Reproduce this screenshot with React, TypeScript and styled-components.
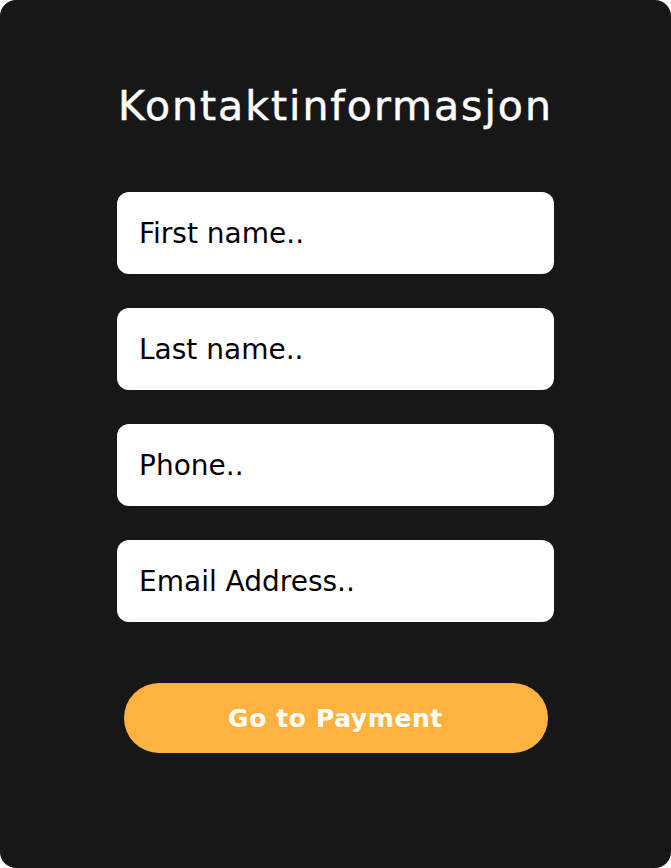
import styled, { createGlobalStyle } from "styled-components";

const GlobalStyle = createGlobalStyle`
  html, body {
    margin: 0;
    padding: 0;
    background: #ffffff;
  }
  * {
    box-sizing: border-box;
  }
`;

const Card = styled.div`
  width: 671px;
  height: 868px;
  background: #171717;
  border-radius: 16px;
  display: flex;
  flex-direction: column;
  align-items: center;
  padding-top: 86px;
  font-family: "DejaVu Sans", Inter, sans-serif;
`;

const Title = styled.h1`
  margin: 0 0 65px;
  font-size: 41px;
  line-height: 41px;
  font-weight: 500;
  letter-spacing: 2px;
  color: #ffffff;
  -webkit-text-stroke: 0.5px #ffffff;
`;

const Fields = styled.form`
  display: flex;
  flex-direction: column;
  align-items: center;
  gap: 34px;
`;

const Field = styled.input`
  width: 437px;
  height: 82px;
  border: none;
  outline: none;
  border-radius: 12px;
  background: #ffffff;
  padding: 0 22px;
  font-family: inherit;
  font-size: 28px;
  color: #000000;

  &::placeholder {
    color: #000000;
    opacity: 1;
  }
`;

const PayButton = styled.button`
  margin-top: 27px;
  width: 424px;
  height: 70px;
  border: none;
  border-radius: 35px;
  background: #ffb240;
  color: #ffffff;
  font-family: inherit;
  font-size: 25px;
  font-weight: 600;
  letter-spacing: 0.6px;
  cursor: pointer;
`;

const fields = ["First name..", "Last name..", "Phone..", "Email Address.."];

export default function App() {
  return (
    <>
      <GlobalStyle />
      <Card>
        <Title>Kontaktinformasjon</Title>
        <Fields onSubmit={(e) => e.preventDefault()}>
          {fields.map((f) => (
            <Field key={f} placeholder={f} />
          ))}
          <PayButton type="submit">Go to Payment</PayButton>
        </Fields>
      </Card>
    </>
  );
}
